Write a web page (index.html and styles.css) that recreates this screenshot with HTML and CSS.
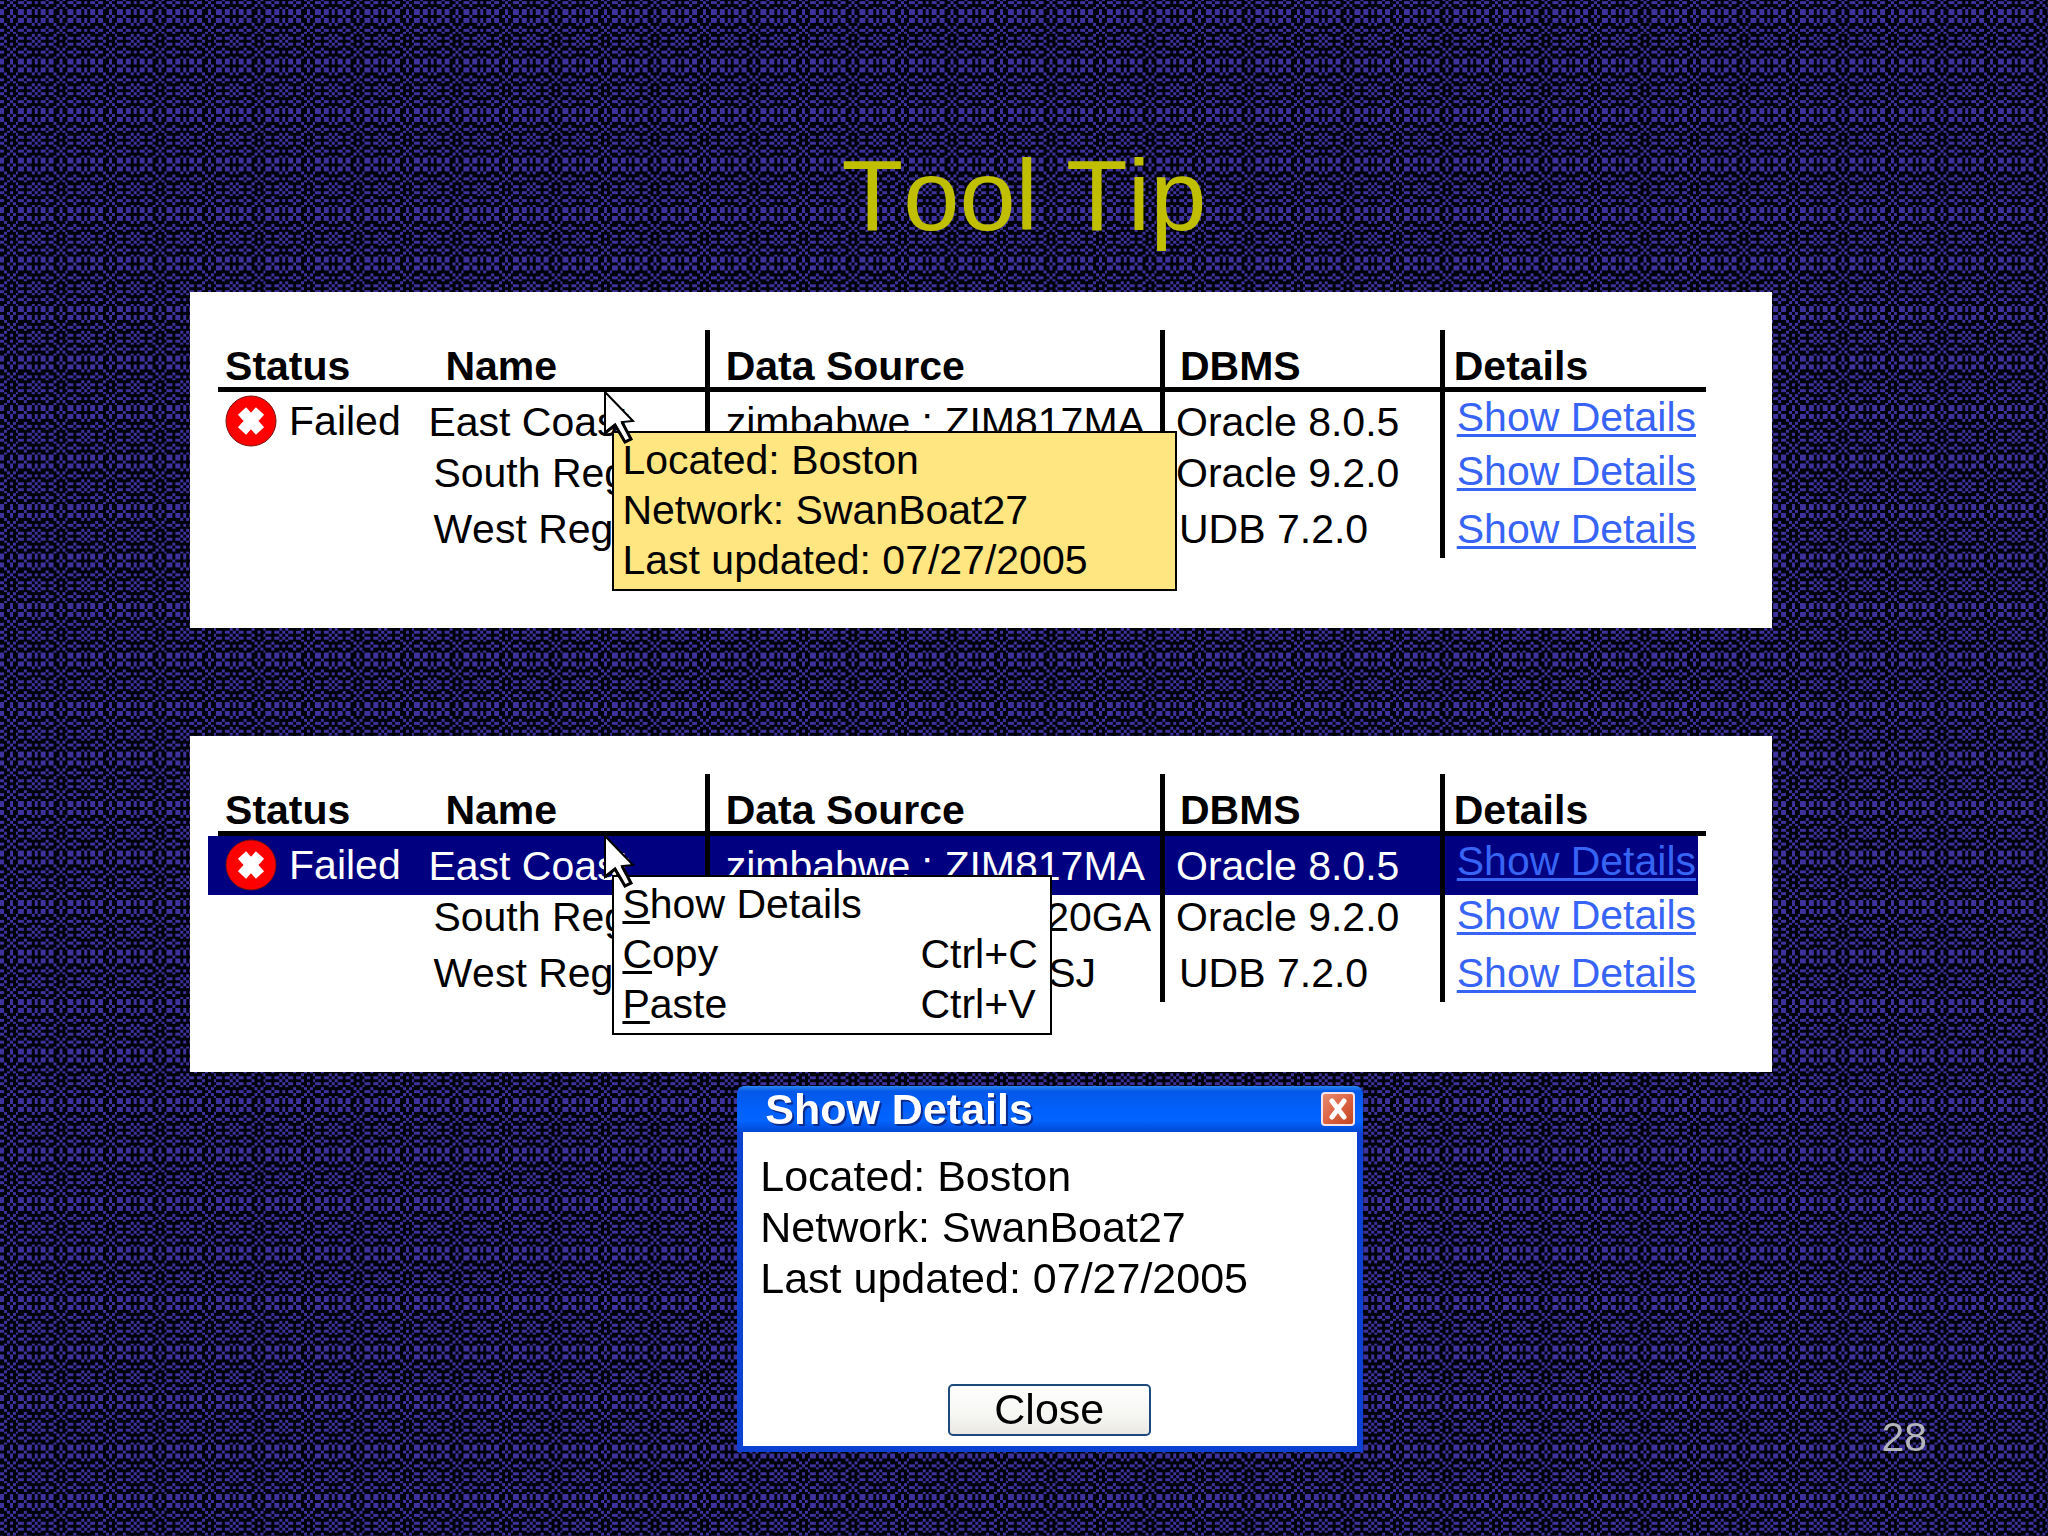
FILE: index.html
```html
<!DOCTYPE html>
<html lang="en">
<head>
<meta charset="UTF-8">
<meta name="viewport" content="width=device-width, initial-scale=1.0">
<title>Tool Tip</title>
<link rel="stylesheet" href="styles.css">
</head>
<body>

<!-- woven background: three kinds of thread rows, repeated -->
<svg class="weave" aria-hidden="true">
  <defs>
    <path id="rowA" d="M0 0h1v1h-1zM3 0h2v1h-2zM6 0h2v1h-2zM9 0h1v1h-1zM11 0h2v1h-2zM14 0h2v1h-2z"/>
    <path id="rowB" d="M1 0h1v1h-1zM5 0h1v1h-1zM13 0h1v1h-1zM17 0h1v1h-1z"/>
    <path id="rowC" d="M2 0h1v1h-1zM8 0h1v1h-1zM10 0h1v1h-1zM16 0h1v1h-1z"/>
    <pattern id="cloth" width="18" height="18" patternUnits="userSpaceOnUse" patternTransform="translate(10 15) scale(2.75)">
      <rect width="18" height="18" fill="#000008"/>
      <g fill="#3e329c">
        <use href="#rowB" y="0"/>
        <use href="#rowA" y="1"/>
        <use href="#rowA" y="2"/>
        <use href="#rowC" y="3"/>
        <use href="#rowB" y="4"/>
        <use href="#rowA" y="5"/>
        <use href="#rowB" y="6"/>
        <use href="#rowC" y="7"/>
        <use href="#rowA" y="8"/>
        <use href="#rowC" y="9"/>
        <use href="#rowA" y="10"/>
        <use href="#rowC" y="11"/>
        <use href="#rowB" y="12"/>
        <use href="#rowA" y="13"/>
        <use href="#rowB" y="14"/>
        <use href="#rowC" y="15"/>
        <use href="#rowA" y="16"/>
        <use href="#rowA" y="17"/>
      </g>
    </pattern>
    <symbol id="failed" viewBox="0 0 52 52">
      <circle cx="26" cy="26" r="25" fill="#ff0000" stroke="#7a1010" stroke-width="1"/>
      <path d="M17 16L35 36M35 16L17 36" stroke="#ffffff" stroke-width="11"/>
    </symbol>
    <symbol id="pointer" viewBox="0 0 34 56">
      <path d="M2 2L30 31L19 32L28 49L22 52L12 35L2 43Z" fill="#ffffff" stroke="#000000" stroke-width="2"/>
      <path d="M2 43L12 35L22 52L28 49L19 32" fill="none" stroke="#000000" stroke-width="3"/>
    </symbol>
  </defs>
  <rect width="100%" height="100%" fill="url(#cloth)"/>
</svg>

<h1>Tool Tip</h1>

<section class="panel">
  <table>
    <colgroup>
      <col class="col-status"><col class="col-name"><col class="col-source"><col class="col-dbms"><col class="col-details">
    </colgroup>
    <thead>
      <tr>
        <th class="status">Status</th>
        <th class="name">Name</th>
        <th class="source">Data Source</th>
        <th class="dbms">DBMS</th>
        <th class="details">Details</th>
      </tr>
    </thead>
    <tbody>
      <tr class="first">
        <td class="status"><div class="state"><svg class="icon"><use href="#failed"/></svg>Failed</div></td>
        <td class="name">East Coast</td>
        <td class="source">zimbabwe : ZIM817MA</td>
        <td class="dbms">Oracle 8.0.5</td>
        <td class="details"><a href="#details">Show Details</a></td>
      </tr>
      <tr class="second">
        <td class="status"></td>
        <td class="name">South Region</td>
        <td class="source end">20GA</td>
        <td class="dbms">Oracle 9.2.0</td>
        <td class="details"><a href="#details">Show Details</a></td>
      </tr>
      <tr class="third">
        <td class="status"></td>
        <td class="name">West Region</td>
        <td class="source end">SJ</td>
        <td class="dbms">UDB 7.2.0</td>
        <td class="details"><a href="#details">Show Details</a></td>
      </tr>
    </tbody>
  </table>

  <div class="popup tooltip" role="tooltip">
    <p>Located: Boston</p>
    <p>Network: SwanBoat27</p>
    <p>Last updated: 07/27/2005</p>
  </div>
  <svg class="pointer"><use href="#pointer"/></svg>
</section>

<section class="panel">
  <table>
    <colgroup>
      <col class="col-status"><col class="col-name"><col class="col-source"><col class="col-dbms"><col class="col-details">
    </colgroup>
    <thead>
      <tr>
        <th class="status">Status</th>
        <th class="name">Name</th>
        <th class="source">Data Source</th>
        <th class="dbms">DBMS</th>
        <th class="details">Details</th>
      </tr>
    </thead>
    <tbody>
      <tr class="first selected">
        <td class="status"><div class="state"><svg class="icon"><use href="#failed"/></svg>Failed</div></td>
        <td class="name">East Coast</td>
        <td class="source">zimbabwe : ZIM817MA</td>
        <td class="dbms">Oracle 8.0.5</td>
        <td class="details"><a href="#details">Show Details</a></td>
      </tr>
      <tr class="second">
        <td class="status"></td>
        <td class="name">South Region</td>
        <td class="source end">20GA</td>
        <td class="dbms">Oracle 9.2.0</td>
        <td class="details"><a href="#details">Show Details</a></td>
      </tr>
      <tr class="third">
        <td class="status"></td>
        <td class="name">West Region</td>
        <td class="source end">SJ</td>
        <td class="dbms">UDB 7.2.0</td>
        <td class="details"><a href="#details">Show Details</a></td>
      </tr>
    </tbody>
  </table>

  <div class="popup menu" role="menu">
    <button type="button" role="menuitem"><span><u>S</u>how Details</span></button>
    <button type="button" role="menuitem"><span><u>C</u>opy</span><span class="shortcut">Ctrl+C</span></button>
    <button type="button" role="menuitem"><span><u>P</u>aste</span><span class="shortcut">Ctrl+V</span></button>
  </div>
  <svg class="pointer"><use href="#pointer"/></svg>
</section>

<div class="bottom">
  <div class="dialog" id="details" role="dialog" aria-labelledby="dialogTitle">
    <div class="titlebar">
      <h2 id="dialogTitle">Show Details</h2>
      <button type="button" class="close-x" aria-label="Close window">
        <svg viewBox="0 0 30 30"><path d="M9 7L21 23M21 7L9 23" stroke="#ffffff" stroke-width="5" stroke-linecap="round"/></svg>
      </button>
    </div>
    <div class="dialog-body">
      <p>Located: Boston</p>
      <p>Network: SwanBoat27</p>
      <p>Last updated: 07/27/2005</p>
      <button type="button" class="close-btn">Close</button>
    </div>
  </div>
  <span class="page-number">28</span>
</div>

</body>
</html>
```
FILE: styles.css
```css
body {
  margin: 0;
  background-color: #000008;
  color: black;
  font-family: "Liberation Sans", Arial, sans-serif;
  font-size: 41px;
  font-kerning: none;
}

.weave {
  position: fixed;
  top: 0;
  left: 0;
  width: 100%;
  height: 100%;
  z-index: -1;
  shape-rendering: crispEdges;
}

h1 {
  margin: 0;
  padding: 137px 0 39px;
  text-align: center;
  color: #bfbf00;
  font-size: 101px;
  font-weight: normal;
  line-height: 116px;
}

p {
  margin: 0;
}

/* white panels */
.panel {
  position: relative;
  box-sizing: border-box;
  width: 77.25%;
  margin: 0 0 108px 9.28%;
  padding: 38px 66px 70px 28px;
  background-color: white;
}

table {
  width: 100%;
  table-layout: fixed;
  border-spacing: 0;
  line-height: 40px;
}

.col-status { width: 14%; }
.col-name { width: 18.7%; }
.col-source { width: 30.6%; }
.col-dbms { width: 18.8%; }
.col-details { width: 17.9%; }

th, td {
  box-sizing: border-box;
  padding: 0;
  text-align: left;
  vertical-align: top;
  white-space: nowrap;
}

th {
  height: 62px;
  padding-top: 16px;
  border-bottom: 5px solid black;
}

.source, .dbms, .details {
  border-left: 5px solid black;
}

th.status { padding-left: 7px; }
th.name { padding-left: 19px; }
th.dbms { padding-left: 15px; }
th.details { padding-left: 9px; }

td.status { padding-left: 7px; }
td.name { padding-left: 7px; }
.source { padding-left: 16px; }
td.dbms { padding-left: 11px; }
td.details { padding-left: 12px; }

.first td { height: 59px; padding-top: 10px; }
.first td.status { padding-top: 3px; }
.first td.name { padding-left: 2px; }
.first td.details { padding-top: 5px; }

.second td { height: 52px; padding-top: 2px; }
.second td.details { padding-top: 0; }

.third td { height: 55px; padding-top: 6px; }
.third td.dbms { padding-left: 14px; }

td.end {
  text-align: right;
  padding-right: 9px;
}

.third td.end {
  padding-right: 64px;
}

.state {
  display: flex;
  align-items: center;
  gap: 12px;
}

.icon {
  width: 52px;
  height: 52px;
}

a {
  color: #3764f5;
  text-decoration: underline;
  text-decoration-thickness: 3px;
  text-underline-offset: 3px;
  text-decoration-skip-ink: none;
}

.selected td {
  background-color: #000080;
  color: white;
}

.selected td.status {
  box-shadow: -10px 0 0 #000080;
}

/* the highlight stops a little before the header rule */
.selected td.details {
  background: linear-gradient(#000080, #000080) no-repeat 0 0 / calc(100% - 8px) 100%;
}

/* tooltip and context menu */
.popup {
  position: absolute;
  top: 139px;
  left: 26.7%;
  box-sizing: border-box;
  padding: 2px 0 4px;
  border: 2px solid black;
  line-height: 50px;
  white-space: nowrap;
}

.tooltip {
  width: 565px;
  padding-left: 8px;
  background-color: #ffe680;
}

.menu {
  width: 440px;
  background-color: white;
}

.menu button {
  display: flex;
  justify-content: space-between;
  width: 100%;
  padding: 0 0 0 8px;
  border: none;
  background: none;
  color: black;
  font: inherit;
  font-kerning: none;
  line-height: 50px;
  text-align: left;
}

.menu u {
  text-decoration-thickness: 3px;
  text-underline-offset: 3px;
}

.shortcut {
  width: 130px;
}

.pointer {
  position: absolute;
  top: 98px;
  left: 26.1%;
  width: 34px;
  height: 56px;
}

/* dialog window */
.bottom {
  display: flex;
  align-items: flex-end;
  justify-content: space-between;
  margin-top: -94px;
  padding: 0 5.9% 0 36%;
}

.dialog {
  box-sizing: border-box;
  width: 626px;
  margin-bottom: 8px;
  border: 6px solid #0c41d2;
  border-top: none;
  border-radius: 8px 8px 0 0;
  background-color: white;
  font-size: 43px;
}

.titlebar {
  display: flex;
  align-items: center;
  justify-content: space-between;
  height: 46px;
  margin: 0 -6px;
  padding: 0 8px 0 28px;
  border-radius: 8px 8px 0 0;
  background: linear-gradient(#2a86f2 0, #0458e8 12%, #0260fb 50%, #0264ff 75%, #0148d4 100%);
}

h2 {
  margin: 0;
  color: white;
  font-size: 43px;
  line-height: 46px;
  text-shadow: 2px 2px 0 #0a2a8c;
}

.close-x {
  box-sizing: border-box;
  width: 34px;
  height: 34px;
  padding: 0;
  border: 2px solid #f4e4ea;
  border-radius: 4px;
  background: linear-gradient(135deg, #e88a70, #dc6444 50%, #c04420);
}

.close-x svg {
  display: block;
  width: 100%;
}

.dialog-body {
  padding: 19px 19px 10px 17px;
  line-height: 51px;
}

.close-btn {
  display: block;
  box-sizing: border-box;
  width: 203px;
  height: 52px;
  margin: 80px auto 0;
  padding: 0 0 2px;
  border: 2px solid #1d4a7c;
  border-radius: 5px;
  background: linear-gradient(#ffffff, #f6f6f3 60%, #e9e8e3);
  color: black;
  font: inherit;
  font-kerning: none;
  line-height: 46px;
}

.page-number {
  color: #b4b4bc;
  line-height: 46px;
}
```
